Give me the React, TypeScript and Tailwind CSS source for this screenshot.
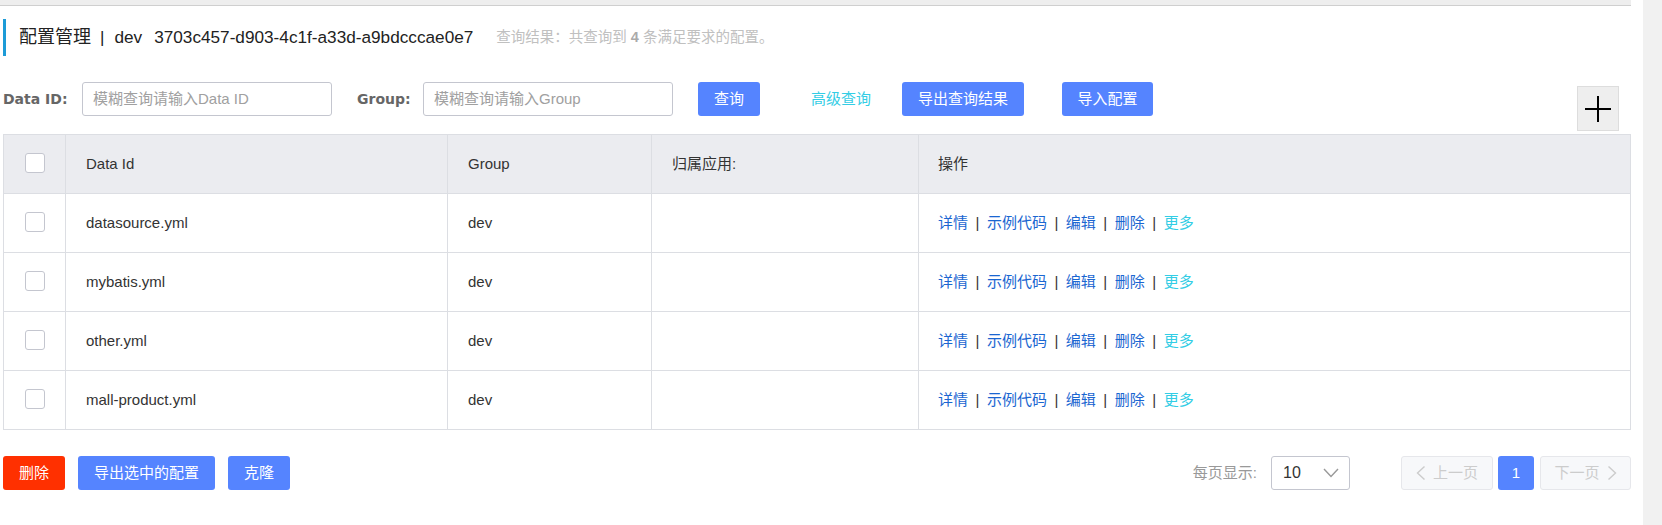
import React from "react";

const rows = ["datasource.yml", "mybatis.yml", "other.yml", "mall-product.yml"];

function Checkbox() {
  return <div className="w-[20px] h-[20px] rounded-[3px] border border-[#c4c6cf] bg-white" />;
}

function Sep() {
  return <span className="mx-[7.5px] text-[#333333]">|</span>;
}

function Actions() {
  return (
    <div className="flex items-center text-[15px]">
      <span className="text-[#1a66d1]">详情</span>
      <Sep />
      <span className="text-[#1a66d1]">示例代码</span>
      <Sep />
      <span className="text-[#1a66d1]">编辑</span>
      <Sep />
      <span className="text-[#1a66d1]">删除</span>
      <Sep />
      <span className="text-[#33cde5]">更多</span>
    </div>
  );
}

export default function App() {
  return (
    <div className="flex w-[1662px] h-[525px] bg-white text-[#333333] font-['Liberation_Sans','Noto_Sans_CJK_SC',sans-serif]">
      <div className="flex-1 flex flex-col">
        <div className="w-[1631px] h-[6px] bg-[#eeeeee] border-b border-[#cfcfcf]" />
        <div className="pl-[3px] w-[1631px]">
          {/* title */}
          <div className="mt-[13px] h-[37px] flex items-center border-l-[3px] border-[#1d9bd7] pl-[13px]">
            <span className="text-[18px] text-[#222222]">配置管理</span>
            <span className="text-[17px] ml-[9px] mr-[10px] text-[#222222]">|</span>
            <span className="text-[17.2px] text-[#222222]">dev</span>
            <span className="text-[17.2px] ml-[12px] text-[#222222]">3703c457-d903-4c1f-a33d-a9bdcccae0e7</span>
            <span className="text-[14.5px] ml-[23px] text-[#c0c0c0]">
              查询结果：共查询到 <b className="text-[#aaaaaa]">4</b> 条满足要求的配置。
            </span>
          </div>

          {/* filter row */}
          <div className="mt-[26px] h-[52px] flex items-start">
            <div className="w-[79px] h-[34px] flex items-center font-['DejaVu_Sans',sans-serif] font-bold text-[14px] text-[#666666]">
              Data ID:
            </div>
            <div className="w-[250px] h-[34px] rounded-[3px] border border-[#c4c6cf] flex items-center pl-[10px] text-[15px] text-[#a0a0a0]">
              模糊查询请输入Data ID
            </div>
            <div className="ml-[25px] w-[66px] h-[34px] flex items-center font-['DejaVu_Sans',sans-serif] font-bold text-[14px] text-[#666666]">
              Group:
            </div>
            <div className="w-[250px] h-[34px] rounded-[3px] border border-[#c4c6cf] flex items-center pl-[10px] text-[15px] text-[#a0a0a0]">
              模糊查询请输入Group
            </div>
            <div className="ml-[25px] w-[62px] h-[34px] rounded-[3px] bg-[#5584ff] flex items-center justify-center text-white text-[15px]">
              查询
            </div>
            <div className="ml-[51px] w-[60px] h-[34px] flex items-center text-[15px] text-[#33cde5]">
              高级查询
            </div>
            <div className="ml-[31px] w-[122px] h-[34px] rounded-[3px] bg-[#5584ff] flex items-center justify-center text-white text-[15px]">
              导出查询结果
            </div>
            <div className="ml-[38px] w-[91px] h-[34px] rounded-[3px] bg-[#5584ff] flex items-center justify-center text-white text-[15px]">
              导入配置
            </div>
            <div className="ml-auto mr-[12px] mt-[4px] w-[42px] h-[45px] bg-[#eeeeee] border border-[#dddddd] flex items-center justify-center">
              <svg width="26" height="26" viewBox="0 0 26 26">
                <rect x="0" y="12" width="26" height="2" fill="#000" />
                <rect x="12" y="0" width="2" height="26" fill="#000" />
              </svg>
            </div>
          </div>

          {/* table */}
          <div className="w-[1628px] border border-[#dcdee3] text-[15px]">
            <div className="grid grid-cols-[62px_382px_204px_267px_1fr] h-[58px] bg-[#ebecf0]">
              <div className="border-r border-[#dcdee3] flex items-center justify-center pb-[2px]">
                <Checkbox />
              </div>
              <div className="border-r border-[#dcdee3] flex items-center pl-[20px]">Data Id</div>
              <div className="border-r border-[#dcdee3] flex items-center pl-[20px]">Group</div>
              <div className="border-r border-[#dcdee3] flex items-center pl-[20px]">归属应用:</div>
              <div className="flex items-center pl-[19px]">操作</div>
            </div>
            {rows.map((r) => (
              <div key={r} className="grid grid-cols-[62px_382px_204px_267px_1fr] h-[59px] border-t border-[#dcdee3] bg-white">
                <div className="border-r border-[#dcdee3] flex items-center justify-center pb-[2px]">
                  <Checkbox />
                </div>
                <div className="border-r border-[#dcdee3] flex items-center pl-[20px]">{r}</div>
                <div className="border-r border-[#dcdee3] flex items-center pl-[20px]">dev</div>
                <div className="border-r border-[#dcdee3]" />
                <div className="flex items-center pl-[19px]">
                  <Actions />
                </div>
              </div>
            ))}
          </div>

          {/* bottom row */}
          <div className="mt-[26px] w-[1628px] h-[34px] flex items-center text-[15px]">
            <div className="w-[62px] h-[34px] rounded-[3px] bg-[#ff3000] flex items-center justify-center text-white">
              删除
            </div>
            <div className="ml-[13px] w-[137px] h-[34px] rounded-[3px] bg-[#5584ff] flex items-center justify-center text-white">
              导出选中的配置
            </div>
            <div className="ml-[13px] w-[62px] h-[34px] rounded-[3px] bg-[#5584ff] flex items-center justify-center text-white">
              克隆
            </div>
            <div className="ml-auto flex items-center">
              <span className="text-[#999999]">每页显示:</span>
              <div className="ml-[14px] w-[79px] h-[34px] rounded-[3px] border border-[#c4c6cf] flex items-center pl-[11px] pr-[10px] justify-between">
                <span className="text-[16px] text-[#333333]">10</span>
                <svg width="16" height="10" viewBox="0 0 16 10">
                  <polyline points="1,1 8,8.5 15,1" fill="none" stroke="#999999" strokeWidth="1.4" />
                </svg>
              </div>
              <div className="ml-[51px] w-[92px] h-[34px] rounded-[3px] border border-[#e6e7eb] bg-[#f7f8fa] flex items-center justify-center text-[#cccccc]">
                <svg width="10" height="14" viewBox="0 0 10 14" className="mr-[7px]">
                  <polyline points="8.5,0.5 1.5,7 8.5,13.5" fill="none" stroke="#cccccc" strokeWidth="1.4" />
                </svg>
                上一页
              </div>
              <div className="ml-[5px] w-[36px] h-[34px] rounded-[3px] bg-[#5584ff] flex items-center justify-center text-white">
                1
              </div>
              <div className="ml-[6px] w-[91px] h-[34px] rounded-[3px] border border-[#e6e7eb] bg-[#f7f8fa] flex items-center justify-center text-[#cccccc]">
                下一页
                <svg width="10" height="14" viewBox="0 0 10 14" className="ml-[7px]">
                  <polyline points="1.5,0.5 8.5,7 1.5,13.5" fill="none" stroke="#cccccc" strokeWidth="1.4" />
                </svg>
              </div>
            </div>
          </div>
        </div>
      </div>
      <div className="w-[19px] h-[525px] bg-[#f1f1f1]" />
    </div>
  );
}
